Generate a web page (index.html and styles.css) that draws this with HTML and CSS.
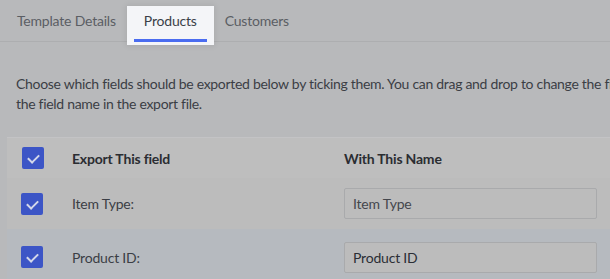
FILE: index.html
```html
<!DOCTYPE html>
<html lang="en">
<head>
  <meta charset="UTF-8">
  <meta name="viewport" content="width=device-width, initial-scale=1.0">
  <title>Export Template</title>
  <link rel="stylesheet" href="styles.css">
</head>
<body>
  <div class="tabs">
    <div class="tab"><span class="tab-label">Template Details</span></div>
    <div class="tab active spotlight"><span class="tab-label">Products</span></div>
    <div class="tab"><span class="tab-label">Customers</span></div>
  </div>

  <p class="intro">Choose which fields should be exported below by ticking them. You can drag and drop to change the field order, and change<br>the field name in the export file.</p>

  <div class="fields">
    <div class="row header">
      <div class="cell-check"><span class="check"></span></div>
      <div class="cell-label">Export This field</div>
      <div class="cell-name">With This Name</div>
    </div>
    <div class="row odd">
      <div class="cell-check"><span class="check"></span></div>
      <div class="cell-label">Item Type:</div>
      <div class="cell-name"><input type="text" value="Item Type"></div>
    </div>
    <div class="row even">
      <div class="cell-check"><span class="check"></span></div>
      <div class="cell-label">Product ID:</div>
      <div class="cell-name"><input type="text" class="dark" value="Product ID"></div>
    </div>
  </div>
</body>
</html>
```

FILE: styles.css
```css
body {
  font-family: Lato, "Open Sans", sans-serif;
  font-size: 14px;
  letter-spacing: -0.2px;
  background-color: #b8b9bb;
  color: #3b3e45;
  margin: 0;
  overflow: hidden;
}
.tabs {
  display: flex;
  padding: 9px 0 0 3px;
  border-bottom: 1px solid #adaeb0;
  white-space: nowrap;
}
.tab {
  padding: 0 4px;
  margin-bottom: -1px;
}
.tab-label {
  display: block;
  padding: 3px 10px 9px;
  line-height: 18px;
  color: #5b5e64;
  border-bottom: 3px solid transparent;
}
.tab.active .tab-label {
  color: #3b3f48;
  border-bottom-color: #4a6cf0;
}
.spotlight {
  position: relative;
  z-index: 1;
  background-color: #f4f5f8;
  box-shadow: 0 0 0 3px #f4f5f8, 0 0 6px 4px rgba(0, 0, 0, 0.08);
}
.intro {
  margin: 32px 0 0;
  padding-left: 16px;
  line-height: 20px;
  white-space: nowrap;
  letter-spacing: -0.3px;
}
.fields {
  margin: 23px 0 0 7px;
  border-top: 1px solid #c3c3c5;
}
.row {
  display: grid;
  grid-template-columns: 65px 272px 1fr;
  align-items: center;
}
.row.header {
  height: 40px;
  background-color: #bebebe;
  font-weight: bold;
  color: #2b2d32;
}
.row.odd {
  height: 51px;
  background-color: #bcbcbc;
}
.row.even {
  height: 56px;
  background-color: #b6babf;
}
.cell-check {
  padding-left: 14px;
  display: flex;
}
.row.header .cell-check {
  padding-left: 15px;
}
.check {
  width: 22px;
  height: 22px;
  border-radius: 2px;
  background-color: #3c55c6;
  position: relative;
}
.check::after {
  content: "";
  position: absolute;
  left: 8px;
  top: 5px;
  width: 5px;
  height: 9px;
  border: solid #d4d8ea;
  border-width: 0 2px 2px 0;
  transform: rotate(45deg);
}
.cell-name input {
  width: 253px;
  height: 31px;
  box-sizing: border-box;
  border: 1px solid #a9aaac;
  border-radius: 2px;
  background-color: #bcbcbc;
  padding: 0 8px;
  font-family: inherit;
  font-size: 14px;
  letter-spacing: -0.2px;
  color: #44474d;
}
.cell-name input.dark {
  color: #2b2e35;
}
```
